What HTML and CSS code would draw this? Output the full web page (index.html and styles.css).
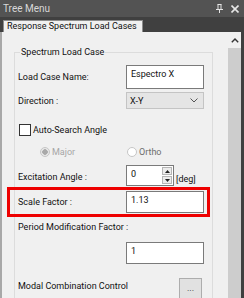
FILE: index.html
```html
<!DOCTYPE html>
<html>
<head>
	<meta charset="utf-8">
	<title>Tree Menu</title>
	<link rel="stylesheet" href="styles.css">
</head>
<body>
	<div class="window">
		<div class="titlebar">
			<span class="title">Tree Menu</span>
			<span class="tools">
				<svg class="pin" width="7" height="9" viewBox="0 0 7 9">
					<path d="M1.5 0.5h4M2 0.5v4.5M5 0.5v4.5M0 5.5h7M3.5 5.5v3.5" stroke="#e6e6e6" stroke-width="1" fill="none"/>
				</svg>
				<svg class="close" width="8" height="8" viewBox="0 0 8 8">
					<path d="M0.5 0.5l7 7M7.5 0.5l-7 7" stroke="#e6e6e6" stroke-width="1.6" fill="none"/>
				</svg>
			</span>
		</div>
		<div class="tabstrip">
			<div class="tab">Response Spectrum Load Cases</div>
		</div>
		<div class="main">
			<div class="content">
				<fieldset class="group">
					<legend>Spectrum Load Case</legend>

					<div class="row row-name">
						<span class="lbl">Load Case Name:</span>
						<div class="textbox tall">Espectro X</div>
					</div>

					<div class="row row-dir">
						<span class="lbl">Direction :</span>
						<div class="combo">
							<span>X-Y</span>
							<svg width="8" height="5" viewBox="0 0 8 5"><path d="M0.5 0.5l3.5 3.5l3.5-3.5" stroke="#555" fill="none"/></svg>
						</div>
					</div>

					<div class="row row-check">
						<span class="checkbox"></span>
						<span class="check-text">Auto-Search Angle</span>
					</div>

					<div class="row row-radio">
						<span class="radio-item disabled"><span class="radio on"></span>Major</span>
						<span class="radio-item ortho"><span class="radio"></span>Ortho</span>
					</div>

					<div class="row row-angle">
						<span class="lbl angle-lbl">Excitation Angle :</span>
						<div class="spinner">
							<span class="spin-value">0</span>
							<span class="spin-btns">
								<span class="spin-btn"><svg width="5" height="3" viewBox="0 0 5 3"><path d="M0 3h5l-2.5-3z" fill="#222"/></svg></span>
								<span class="spin-btn"><svg width="5" height="3" viewBox="0 0 5 3"><path d="M0 0h5l-2.5 3z" fill="#222"/></svg></span>
							</span>
						</div>
						<span class="unit">[deg]</span>
					</div>

					<div class="row highlight">
						<span class="lbl">Scale Factor :</span>
						<div class="textbox">1.13</div>
					</div>

					<div class="row row-period">
						<span class="lbl wide">Period Modification Factor :</span>
					</div>
					<div class="row row-period-val">
						<span class="lbl"></span>
						<div class="textbox">1</div>
					</div>

					<div class="row row-modal">
						<span class="lbl modal-lbl">Modal Combination Control</span>
						<div class="button">...</div>
					</div>
				</fieldset>
			</div>
			<div class="scrollbar">
				<div class="scroll-up">
					<svg width="8" height="5" viewBox="0 0 8 5"><path d="M0.8 4.2l3.2-3.2l3.2 3.2" stroke="#333" stroke-width="1.4" fill="none"/></svg>
				</div>
				<div class="thumb"></div>
			</div>
			<div class="edge"></div>
		</div>
	</div>
</body>
</html>
```

FILE: styles.css
```css
* {
	box-sizing: border-box;
}

html, body {
	margin: 0;
	padding: 0;
}

body {
	font-family: Roboto, "Liberation Sans", sans-serif;
	font-size: 9px;
	color: #111;
	background: #f0f0f0;
}

.window {
	width: 244px;
	height: 298px;
	overflow: hidden;
	display: flex;
	flex-direction: column;
}

.titlebar {
	height: 17px;
	background: #535353;
	display: flex;
	align-items: center;
	justify-content: space-between;
	padding: 0 5px 0 3px;
}

.title {
	color: #d8d8d8;
	font-size: 10px;
}

.tools {
	display: flex;
	align-items: center;
	gap: 8px;
}

.tools svg {
	display: block;
}

.tabstrip {
	height: 15px;
	background: #404040;
	display: flex;
	align-items: flex-end;
	padding-left: 3px;
}

.tab {
	height: 12px;
	width: 140px;
	background: #f0f0f0;
	border: 1px solid #8c8c8c;
	border-bottom: none;
	padding-left: 3px;
	line-height: 11px;
	white-space: nowrap;
	color: #111;
}

.main {
	flex: 1;
	display: flex;
	min-height: 0;
}

.content {
	width: 226px;
	border-left: 2px solid #a8a8a8;
	padding: 14px 13px 0 12px;
}

.group {
	margin: 0;
	min-width: 0;
	border: 1px solid #dcdcdc;
	padding: 0;
	width: 199px;
}

.group legend {
	margin-left: 5px;
	padding: 0 1px;
	line-height: 12px;
}

.row {
	display: flex;
	align-items: center;
	padding-left: 3px;
}

.lbl {
	width: 108px;
	flex: none;
	line-height: 12px;
	white-space: nowrap;
}

.lbl.wide {
	width: auto;
}

.textbox {
	width: 78px;
	height: 22px;
	background: #fff;
	border: 1px solid #7a7a7a;
	padding: 2px 0 0 4px;
	line-height: 12px;
}

.textbox.tall {
	height: 24px;
}

.row-name {
	margin-top: 7px;
}

.row-dir {
	margin-top: 3px;
}

.combo {
	width: 78px;
	height: 17px;
	background: #e5e5e5;
	border: 1px solid #c4c4c4;
	display: flex;
	align-items: center;
	justify-content: space-between;
	padding: 0 5px 0 3px;
}

.combo svg {
	display: block;
}

.row-check {
	margin-top: 15px;
	height: 12px;
	padding-left: 4px;
}

.checkbox {
	width: 12px;
	height: 12px;
	border: 1px solid #333;
	background: #fff;
	flex: none;
}

.check-text {
	margin-left: 2px;
}

.row-radio {
	margin-top: 10px;
	height: 12px;
	padding-left: 25px;
}

.radio-item {
	display: flex;
	align-items: center;
	gap: 2px;
	color: #6e6e6e;
}

.radio-item.disabled {
	color: #a6a6a6;
	width: 87px;
}

.radio {
	width: 10px;
	height: 10px;
	border-radius: 50%;
	border: 1px solid #c6c6c6;
	background: #fff;
	flex: none;
}

.radio.on {
	background: radial-gradient(circle, #a9a9a9 0 2.5px, #e8e8e8 3px);
}

.row-angle {
	margin-top: 7px;
}

.angle-lbl {
	margin-top: 3px;
}

.spinner {
	width: 48px;
	height: 21px;
	background: #fff;
	border: 1px solid #7a7a7a;
	display: flex;
	justify-content: space-between;
	padding: 1px 1px 1px 4px;
}

.spin-value {
	line-height: 12px;
	padding-top: 1px;
}

.spin-btns {
	display: flex;
	flex-direction: column;
	gap: 1px;
}

.spin-btn {
	width: 10px;
	flex: 1;
	background: #ececec;
	border: 1px solid #b5b5b5;
	display: flex;
	align-items: center;
	justify-content: center;
}

.spin-btn svg {
	display: block;
}

.unit {
	margin-left: 2px;
	margin-top: 6px;
}

.highlight {
	margin: 1px 2px 0 -8px;
	border: 3px solid #ee0000;
	padding: 1px 0 1px 8px;
}

.row-period {
	margin-top: 4px;
}

.row-period-val {
	margin-top: 9px;
}

.row-modal {
	margin-top: 14px;
	align-items: flex-start;
}

.modal-lbl {
	width: 161px;
	margin-top: 2px;
}

.button {
	width: 23px;
	height: 23px;
	background: #e1e1e1;
	border: 1px solid #adadad;
	text-align: center;
	line-height: 18px;
	color: #333;
}

.scrollbar {
	width: 15px;
	display: flex;
	flex-direction: column;
	background: #f0f0f0;
}

.scroll-up {
	height: 16px;
	display: flex;
	align-items: center;
	justify-content: center;
	padding-left: 2px;
}

.scroll-up svg {
	display: block;
}

.thumb {
	flex: 1;
	margin-left: 2px;
	background: #cdcdcd;
}

.edge {
	width: 3px;
	background: #3f3f3f;
}
```
